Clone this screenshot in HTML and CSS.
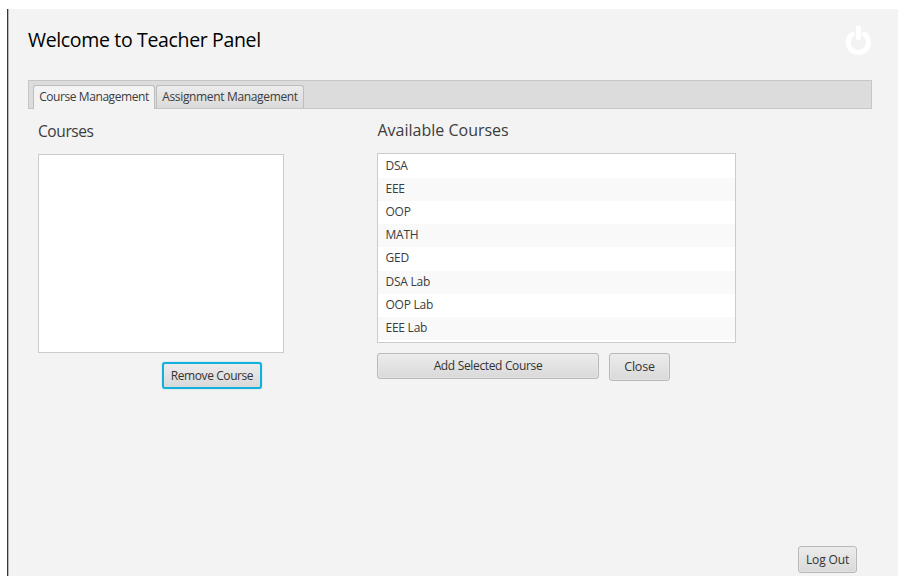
FILE: index.html
```html
<!DOCTYPE html>
<html lang="en">
<head>
<meta charset="utf-8">
<title>Teacher Panel</title>
<link rel="stylesheet" href="styles.css">
</head>
<body>
<main class="window">
  <header class="header">
    <h1 class="title">Welcome to Teacher Panel</h1>
    <svg class="power" viewBox="0 0 28 30" fill="none" stroke="#fff" stroke-linecap="round">
      <path d="M7.1 9.3A10.2 10.2 0 1 0 19.7 9.3" stroke-width="5"/>
      <path d="M13.4 2.8V13" stroke-width="5"/>
    </svg>
  </header>
  <nav class="tabs">
    <div class="tab tab-active"><span>Course Management</span></div>
    <div class="tab tab-second"><span>Assignment Management</span></div>
  </nav>
  <div class="content">
    <section class="mine">
      <h2 class="heading">Courses</h2>
      <div class="list list-empty"></div>
      <button class="btn btn-remove">Remove Course</button>
    </section>
    <section class="available">
      <h2 class="heading heading-available">Available Courses</h2>
      <ul class="list list-courses">
        <li>DSA</li><li>EEE</li><li>OOP</li><li>MATH</li><li>GED</li><li>DSA Lab</li><li>OOP Lab</li><li>EEE Lab</li>
      </ul>
      <div class="actions">
        <button class="btn btn-add">Add Selected Course</button>
        <button class="btn btn-close">Close</button>
      </div>
    </section>
  </div>
  <footer class="footer"><button class="btn btn-logout">Log Out</button></footer>
</main>
</body>
</html>
```
FILE: styles.css
```css
* { box-sizing: border-box; }
body {
  margin: 0;
  height: 582px;
  padding: 9px 17px 6px 7px;
  overflow: hidden;
  background: #fff;
  color: #3c3c3c;
  font: 12px/18px "Open Sans", "Noto Sans", sans-serif;
}
.window {
  display: flex;
  flex-direction: column;
  height: 567px;
  padding: 0 26px 3px 20px;
  background: #f3f3f3;
  border-left: 1px solid #373737;
  box-shadow: inset 1px 0 #b8b8b8;
}
.header {
  display: flex;
  justify-content: space-between;
  height: 71px;
}
.title {
  margin: 16px 0 0;
  font-size: 19.5px;
  line-height: 30px;
  font-weight: 400;
  letter-spacing: -0.34px;
  color: #000;
  white-space: nowrap;
}
.power { width: 28px; height: 30px; margin: 16px -1px 0 0; }
.tabs {
  display: flex;
  gap: 1px;
  height: 29px;
  flex: none;
  padding: 4px 0 0 4px;
  background: #dcdcdc;
  border: 1px solid #c6c6c6;
}
.tab {
  display: flex;
  justify-content: center;
  width: 122px;
  height: 23px;
  line-height: 22px;
  letter-spacing: -0.34px;
  background: linear-gradient(#ececec, #dadada);
  border: 1px solid #bdbdbd;
  border-bottom: 0;
  border-radius: 3px 3px 0 0;
  white-space: nowrap;
}
.tab-active { height: 24px; background: #f3f3f3; letter-spacing: -0.42px; }
.tab-second { width: 148px; }
.content { display: flex; padding: 0 0 0 10px; }
.mine { width: 246px; margin-right: 93px; display: flex; flex-direction: column; }
.available { width: 359px; }
.heading {
  margin: 11px 0;
  font-size: 15.5px;
  line-height: 23px;
  font-weight: 400;
  letter-spacing: -0.4px;
  white-space: nowrap;
}
.heading-available { margin: 10px 0 11px; padding-left: 0.5px; font-size: 16px; letter-spacing: 0; }
.list { margin: 0; padding: 0; list-style: none; background: #fff; border: 1px solid #cbcbcb; }
.list-empty { height: 199px; }
.list-courses { height: 190px; padding-top: 0.6px; }
.list-courses li { height: 23.2px; line-height: 22.8px; padding-left: 7.5px; letter-spacing: -0.25px; }
.list-courses li:nth-child(even) { background: #f9f9f9; }
.btn {
  display: block;
  padding: 0;
  height: 27px;
  font: inherit;
  letter-spacing: -0.34px;
  color: #333;
  background: linear-gradient(#ececec, #d9d9d9);
  border: 1px solid #b9b9b9;
  border-radius: 3px;
  box-shadow: inset 0 0 0 1px #eaeaea88;
  white-space: nowrap;
}
.btn-remove {
  align-self: flex-end;
  width: 100px;
  margin: 9px 22px 0 0;
  letter-spacing: -0.42px;
  border: 2px solid #12b0dc;
  box-shadow: 0 0 1px #12b0dc;
}
.actions { display: flex; gap: 10px; margin-top: 10px; }
.btn-add { width: 222px; height: 26px; }
.btn-close { width: 61px; height: 28px; font-size: 12.5px; letter-spacing: -0.2px; }
.footer { display: flex; justify-content: flex-end; margin-top: auto; padding-right: 15px; }
.btn-logout { width: 59px; height: 27px; letter-spacing: -0.15px; }
```
